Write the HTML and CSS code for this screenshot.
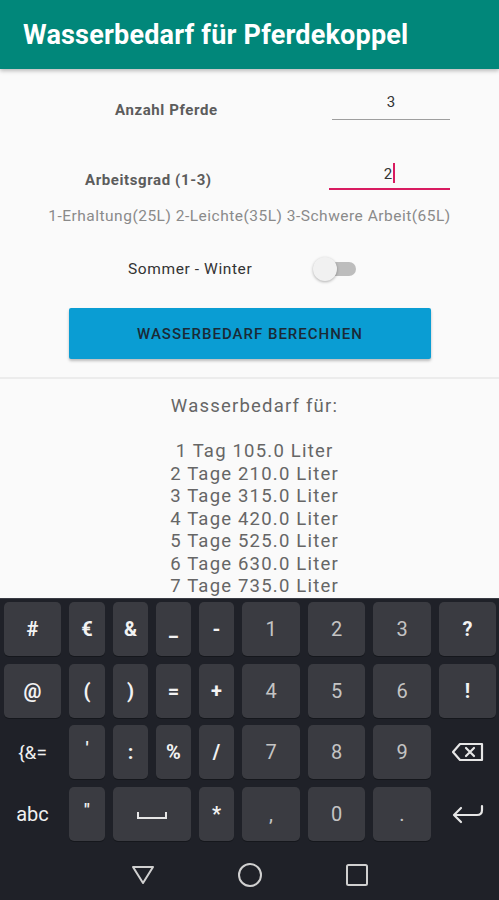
FILE: index.html
```html
<!DOCTYPE html>
<html lang="de">
<head>
    <meta charset="UTF-8">
    <meta name="viewport" content="width=device-width, initial-scale=1.0">
    <title>Wasserbedarf für Pferdekoppel</title>
    <link rel="stylesheet" href="styles.css">
</head>
<body>
    <header class="app-bar">
        <h1>Wasserbedarf für Pferdekoppel</h1>
    </header>

    <main class="content">
        <div class="form">
            <div class="field-row row-horses">
                <label class="field-label">Anzahl Pferde</label>
                <div class="field">3</div>
            </div>
            <div class="field-row row-grade">
                <label class="field-label">Arbeitsgrad (1-3)</label>
                <div class="field field-active">2<span class="caret"></span></div>
            </div>
            <p class="hint">1-Erhaltung(25L) 2-Leichte(35L) 3-Schwere Arbeit(65L)</p>
            <div class="switch-row">
                <span class="switch-label">Sommer - Winter</span>
                <span class="switch"><span class="switch-thumb"></span></span>
            </div>
            <button class="calc-button">Wasserbedarf berechnen</button>
        </div>

        <div class="result">
            <p>Wasserbedarf für:</p>
            <p>&nbsp;</p>
            <p>1 Tag 105.0 Liter</p>
            <p>2 Tage 210.0 Liter</p>
            <p>3 Tage 315.0 Liter</p>
            <p>4 Tage 420.0 Liter</p>
            <p>5 Tage 525.0 Liter</p>
            <p>6 Tage 630.0 Liter</p>
            <p>7 Tage 735.0 Liter</p>
        </div>
    </main>

    <div class="keyboard">
        <div class="keys">
            <div class="key sym">#</div>
            <div class="key sym">€</div>
            <div class="key sym">&amp;</div>
            <div class="key sym">_</div>
            <div class="key sym">-</div>
            <div class="key num">1</div>
            <div class="key num">2</div>
            <div class="key num">3</div>
            <div class="key sym">?</div>

            <div class="key sym">@</div>
            <div class="key sym">(</div>
            <div class="key sym">)</div>
            <div class="key sym">=</div>
            <div class="key sym">+</div>
            <div class="key num">4</div>
            <div class="key num">5</div>
            <div class="key num">6</div>
            <div class="key sym">!</div>

            <div class="key flat">{&amp;=</div>
            <div class="key sym quote">'</div>
            <div class="key sym">:</div>
            <div class="key sym">%</div>
            <div class="key sym">/</div>
            <div class="key num">7</div>
            <div class="key num">8</div>
            <div class="key num">9</div>
            <div class="key flat">
                <svg width="34" height="20" viewBox="0 0 34 20">
                    <path d="M9 2 H31 V18 H9 L2 10 Z" fill="none" stroke="#e6e6e6" stroke-width="2.2" stroke-linejoin="round"/>
                    <path d="M15 6 L23 14 M23 6 L15 14" stroke="#e6e6e6" stroke-width="2.2" stroke-linecap="round"/>
                </svg>
            </div>

            <div class="key flat abc">abc</div>
            <div class="key sym quote">"</div>
            <div class="key space"><span class="space-mark"></span></div>
            <div class="key sym">*</div>
            <div class="key num">,</div>
            <div class="key num">0</div>
            <div class="key num">.</div>
            <div class="key flat">
                <svg width="32" height="22" viewBox="0 0 32 22">
                    <path d="M30 3 V7 Q30 12 25 12 H3" fill="none" stroke="#e6e6e6" stroke-width="2.2" stroke-linecap="round"/>
                    <path d="M9 5 L2 12 L9 19" fill="none" stroke="#e6e6e6" stroke-width="2.2" stroke-linecap="round" stroke-linejoin="round"/>
                </svg>
            </div>
        </div>

        <nav class="nav-bar">
            <svg width="24" height="22" viewBox="0 0 24 22">
                <path d="M2 3 H22 L12 19 Z" fill="none" stroke="#d0d0d0" stroke-width="2" stroke-linejoin="round"/>
            </svg>
            <svg width="26" height="26" viewBox="0 0 26 26">
                <circle cx="13" cy="13" r="11" fill="none" stroke="#d0d0d0" stroke-width="2"/>
            </svg>
            <svg width="24" height="24" viewBox="0 0 24 24">
                <rect x="2" y="2" width="20" height="20" rx="1.5" fill="none" stroke="#d0d0d0" stroke-width="2"/>
            </svg>
        </nav>
    </div>
</body>
</html>
```

FILE: styles.css
```css
body {
    margin: 0;
    width: 499px;
    height: 900px;
    overflow: hidden;
    background-color: #fafafa;
    font-family: Roboto, "Liberation Sans", sans-serif;
    color: #333;
}

.app-bar {
    height: 69px;
    background-color: #01877a;
    box-shadow: 0 2px 4px rgba(0, 0, 0, 0.25);
    position: relative;
    z-index: 1;
    display: flex;
    align-items: center;
    padding-left: 23px;
}

.app-bar h1 {
    margin: 0;
    color: #fff;
    font-size: 27px;
    font-weight: bold;
    letter-spacing: 0.2px;
}

.content {
    height: 529px;
    overflow: hidden;
}

.form {
    padding-top: 19px;
    border-bottom: 2px solid #ececec;
    padding-bottom: 18px;
}

.field-row {
    display: flex;
    align-items: flex-start;
}

.field-label {
    font-size: 15px;
    font-weight: bold;
    letter-spacing: 0.6px;
    color: #5c5c5c;
    line-height: 20px;
}

.row-horses .field-label {
    margin-left: 115px;
    margin-top: 12px;
    width: 217px;
}

.row-grade {
    margin-top: 40px;
}

.row-grade .field-label {
    margin-left: 85px;
    margin-top: 10px;
    width: 244px;
}

.field {
    width: 118px;
    line-height: 28px;
    padding-bottom: 3px;
    text-align: center;
    font-size: 15px;
    color: #333;
    border-bottom: 1px solid #9e9e9e;
}

.field-active {
    width: 121px;
    padding-bottom: 0;
    border-bottom: 2px solid #d81b60;
}

.caret {
    display: inline-block;
    width: 2px;
    height: 20px;
    background-color: #d81b60;
    vertical-align: middle;
    margin-left: 1px;
    margin-top: -4px;
}

.hint {
    margin: 16px 0 0;
    text-align: center;
    font-size: 15.5px;
    letter-spacing: 0.5px;
    line-height: 20px;
    color: #8a8a8a;
}

.switch-row {
    display: flex;
    align-items: center;
    height: 24px;
    margin-top: 31px;
    padding-left: 128px;
}

.switch-label {
    font-size: 15.5px;
    letter-spacing: 0.6px;
    color: #333;
    width: 184px;
}

.switch {
    position: relative;
    width: 38px;
    height: 14px;
    margin-left: 6px;
    border-radius: 7px;
    background-color: #bdbdbd;
}

.switch-thumb {
    position: absolute;
    left: -5px;
    top: -5px;
    width: 24px;
    height: 24px;
    border-radius: 50%;
    background-color: #f1f1f1;
    box-shadow: 0 1px 3px rgba(0, 0, 0, 0.3);
}

.calc-button {
    display: block;
    width: 362px;
    height: 51px;
    margin: 27px 0 0 69px;
    border: none;
    border-radius: 2px;
    background-color: #0a9dd3;
    box-shadow: 0 2px 3px rgba(0, 0, 0, 0.25);
    color: #1b2a36;
    font-family: Roboto, "Liberation Sans", sans-serif;
    font-size: 15px;
    font-weight: 500;
    letter-spacing: 1px;
    text-transform: uppercase;
}

.result {
    padding-top: 16px;
    padding-left: 10px;
    text-align: center;
    font-size: 18.5px;
    letter-spacing: 1.2px;
    line-height: 22.5px;
    color: #666;
}

.result p {
    margin: 0;
}

.keyboard {
    height: 302px;
    background-color: #1f2128;
    border-top: 1px solid #3a3c44;
    box-sizing: border-box;
}

.keys {
    display: grid;
    grid-template-columns: 57px 36px 35px 35px 35px 58px 57px 58px 57px;
    grid-auto-rows: 54px;
    column-gap: 8px;
    row-gap: 7.5px;
    padding: 3px 3px 0 4px;
}

.key {
    display: flex;
    align-items: center;
    justify-content: center;
    border-radius: 5px;
    background-color: #3a3b41;
    box-shadow: 0 1px 0 #15171c;
    font-size: 20px;
}

.sym {
    color: #f2f2f2;
    font-weight: bold;
}

.num {
    color: #c4c4c4;
}

.quote {
    align-items: flex-start;
    padding-top: 12px;
    box-sizing: border-box;
    font-size: 17px;
}

.flat {
    background: none;
    box-shadow: none;
    color: #f0f0f0;
    font-size: 19px;
}

.abc {
    font-size: 20px;
}

.space {
    grid-column: span 2;
}

.space-mark {
    width: 26px;
    height: 5px;
    border: 2px solid #e6e6e6;
    border-top: none;
    margin-top: 4px;
}

.nav-bar {
    display: flex;
    justify-content: center;
    align-items: center;
    gap: 82px;
    height: 56px;
    margin-top: 6px;
}
```
